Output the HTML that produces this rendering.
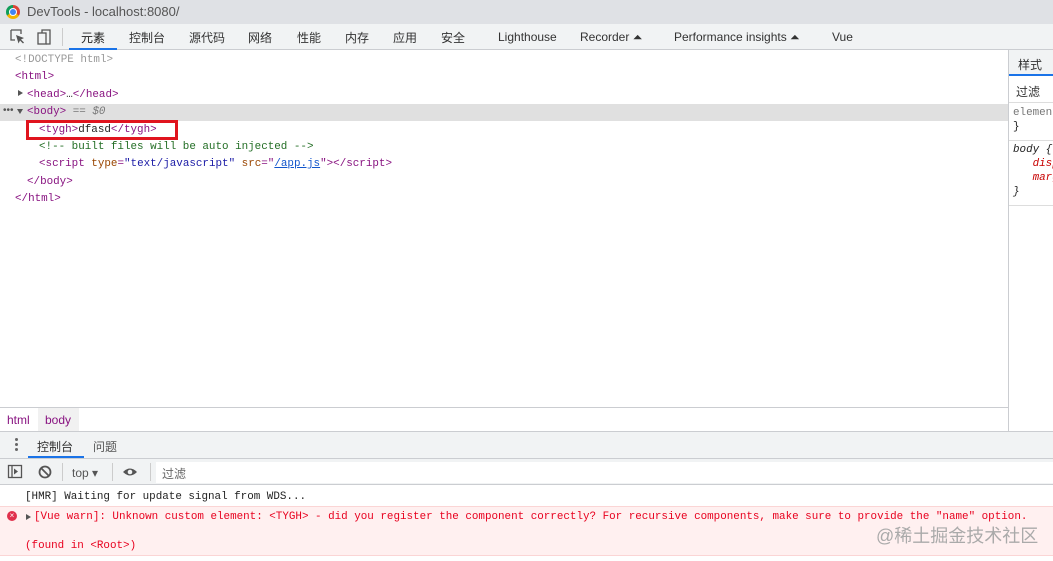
<!DOCTYPE html>
<html><head><meta charset="utf-8"><style>
*{margin:0;padding:0;box-sizing:border-box}
body{width:1053px;height:561px;overflow:hidden;background:#fff;font-family:"Liberation Sans","Noto Sans CJK SC",sans-serif;font-size:12px;color:#333;position:relative}
.abs{position:absolute;white-space:nowrap}
.mono{font-family:"Liberation Mono","Noto Sans CJK SC",monospace;font-size:10.9px;white-space:pre}
.tag{color:#881280}
.attr{color:#994500}
.val{color:#1a1aa6}
</style></head><body>
<div class="abs" style="left:0;top:0;width:1053px;height:24px;background:#dfe1e5"></div>
<div class="abs" style="left:6px;top:5px;width:14px;height:14px;border-radius:50%;background:conic-gradient(#db4437 0 120deg,#f4b400 120deg 240deg,#0f9d58 240deg 360deg)"></div>
<div class="abs" style="left:10px;top:9px;width:6px;height:6px;border-radius:50%;background:#4285f4;box-shadow:0 0 0 1px #fff"></div>
<div class="abs" style="left:27px;top:4px;font-size:13px;color:#555">DevTools - localhost:8080/</div>
<div class="abs" style="left:0;top:24px;width:1053px;height:26px;background:#f1f3f4;border-bottom:1px solid #cbcdd1"></div>
<svg class="abs" style="left:9px;top:28px" width="44" height="18"><path d="M2 2h10v4M2 2v10h4" stroke="#555" fill="none" stroke-width="1.3"/><path d="M7 7l8 3-3 1.5 3 3-1 1-3-3-1.5 3z" fill="#555"/><rect x="29" y="5" width="8" height="11" stroke="#555" fill="none" stroke-width="1.3"/><path d="M33 5V2h8v14h-4" stroke="#555" fill="none" stroke-width="1.3"/></svg>
<div class="abs" style="left:62px;top:28px;width:1px;height:18px;background:#ccc"></div>
<div class="abs" style="left:69px;top:48px;width:48px;height:2px;background:#1a73e8"></div>
<div class="abs" style="top:29px;left:0;font-size:12px;color:#333">
<span class="abs" style="left:81px;color:#222">元素</span><span class="abs" style="left:129px">控制台</span><span class="abs" style="left:189px">源代码</span><span class="abs" style="left:248px">网络</span><span class="abs" style="left:297px">性能</span><span class="abs" style="left:345px">内存</span><span class="abs" style="left:393px">应用</span><span class="abs" style="left:441px">安全</span><span class="abs" style="left:498px;top:1px">Lighthouse</span><span class="abs" style="left:580px;top:1px">Recorder ⏶</span><span class="abs" style="left:674px;top:1px">Performance insights ⏶</span><span class="abs" style="left:832px;top:1px">Vue</span></div>
<div class="abs" style="left:0;top:104px;width:1008px;height:17px;background:#e0e0e0"></div>
<div class="abs mono" style="left:15px;top:54px;color:#999">&lt;!DOCTYPE html&gt;</div>
<div class="abs mono" style="left:15px;top:71px"><span class="tag">&lt;html&gt;</span></div>
<div class="abs mono" style="left:27px;top:89px"><span class="tag">&lt;head&gt;</span>…<span class="tag">&lt;/head&gt;</span></div>
<div class="abs mono" style="left:27px;top:106px"><span class="tag">&lt;body&gt;</span> <span style="color:#777;font-style:italic">== $0</span></div>
<div class="abs mono" style="left:39px;top:124px"><span class="tag">&lt;tygh&gt;</span><span style="color:#222">dfasd</span><span class="tag">&lt;/tygh&gt;</span></div>
<div class="abs mono" style="left:39px;top:141px;color:#236e25">&lt;!-- built files will be auto injected --&gt;</div>
<div class="abs mono" style="left:39px;top:158px"><span class="tag">&lt;script</span> <span class="attr">type</span><span class="tag">=</span><span class="val">"text/javascript"</span> <span class="attr">src</span><span class="tag">="</span><span style="text-decoration:underline;color:#1155cc">/app.js</span><span class="tag">"&gt;&lt;/script&gt;</span></div>
<div class="abs mono" style="left:27px;top:176px"><span class="tag">&lt;/body&gt;</span></div>
<div class="abs mono" style="left:15px;top:193px"><span class="tag">&lt;/html&gt;</span></div>
<div class="abs" style="left:18px;top:90px;border-left:5px solid #555;border-top:3.5px solid transparent;border-bottom:3.5px solid transparent"></div>
<div class="abs" style="left:17px;top:109px;border-top:5px solid #555;border-left:3.5px solid transparent;border-right:3.5px solid transparent"></div>
<div class="abs" style="left:3px;top:105px;font-size:10px;color:#555">•••</div>
<div class="abs" style="left:26px;top:120px;width:152px;height:20px;border:3px solid #e0141e"></div>
<div class="abs" style="left:1008px;top:50px;width:1px;height:381px;background:#cbcdd1"></div>
<div class="abs" style="left:1009px;top:50px;width:44px;height:26px;background:#f1f3f4;border-bottom:2px solid #1a73e8"></div>
<div class="abs" style="left:1018px;top:56px">样式</div>
<div class="abs" style="left:1009px;top:78px;width:44px;height:25px;border-bottom:1px solid #ddd"></div>
<div class="abs" style="left:1016px;top:83px">过滤</div>
<div class="abs mono" style="left:1013px;top:106px;line-height:14px;color:#777">elemen
<span style="color:#222">}</span></div>
<div class="abs" style="left:1009px;top:140px;width:44px;height:1px;background:#ddd"></div>
<div class="abs mono" style="left:1013px;top:143px;line-height:14px;font-style:italic;color:#222">body {
   <span style="color:#c80000">disp</span>
   <span style="color:#c80000">marg</span>
}</div>
<div class="abs" style="left:1009px;top:205px;width:44px;height:1px;background:#ddd"></div>
<div class="abs" style="left:0;top:407px;width:1008px;height:1px;background:#cbcdd1"></div>
<div class="abs" style="left:38px;top:408px;width:41px;height:23px;background:#f1f1f1"></div>
<div class="abs" style="left:7px;top:413px;color:#881280">html</div>
<div class="abs" style="left:45px;top:413px;color:#881280">body</div>
<div class="abs" style="left:0;top:431px;width:1053px;height:28px;background:#f1f3f4;border-top:1px solid #cbcdd1;border-bottom:1px solid #cbcdd1"></div>
<div class="abs" style="left:15px;top:438px;width:3px;height:3px;background:#666;border-radius:50%;box-shadow:0 5px 0 #666,0 10px 0 #666"></div>
<div class="abs" style="left:37px;top:438px">控制台</div>
<div class="abs" style="left:28px;top:456px;width:56px;height:2px;background:#1a73e8"></div>
<div class="abs" style="left:93px;top:438px;color:#555">问题</div>
<div class="abs" style="left:0;top:459px;width:1053px;height:26px;background:#f1f3f4;border-bottom:1px solid #cbcdd1"></div>
<svg class="abs" style="left:7px;top:464px" width="140" height="16"><rect x="1.5" y="1.5" width="13" height="12" fill="none" stroke="#555" stroke-width="1.3"/><path d="M5 2v11" stroke="#555" stroke-width="1.3"/><path d="M7 4.5l4 3-4 3z" fill="#555"/><circle cx="38" cy="8" r="5.5" fill="none" stroke="#555" stroke-width="1.8"/><path d="M34 4l8 8" stroke="#555" stroke-width="1.8"/><path d="M116 8q7-7 14 0q-7 7-14 0z" fill="#555"/><circle cx="123" cy="8" r="2.3" fill="#f1f3f4"/></svg>
<div class="abs" style="left:62px;top:463px;width:1px;height:18px;background:#ccc"></div>
<div class="abs" style="left:72px;top:466px;color:#555">top ▾</div>
<div class="abs" style="left:112px;top:463px;width:1px;height:18px;background:#ccc"></div>
<div class="abs" style="left:150px;top:463px;width:1px;height:18px;background:#ccc"></div>
<div class="abs" style="left:156px;top:462px;width:897px;height:21px;background:#fff"></div>
<div class="abs" style="left:162px;top:465px;color:#666">过滤</div>
<div class="abs mono" style="left:25px;top:491px;color:#222">[HMR] Waiting for update signal from WDS...</div>
<div class="abs" style="left:0;top:506px;width:1053px;height:50px;background:#fff0f0;border-top:1px solid #fbd5d5;border-bottom:1px solid #fbd5d5"></div>
<div class="abs" style="left:7px;top:511px;width:10px;height:10px;border-radius:50%;background:#e0304c;color:#fff;font-size:8px;line-height:10px;text-align:center">×</div>
<div class="abs" style="left:26px;top:514px;border-left:5px solid #555;border-top:3.5px solid transparent;border-bottom:3.5px solid transparent"></div>
<div class="abs mono" style="left:34px;top:511px;color:#e8001e">[Vue warn]: Unknown custom element: &lt;TYGH&gt; - did you register the component correctly? For recursive components, make sure to provide the "name" option.</div>
<div class="abs mono" style="left:25px;top:540px;color:#e8001e">(found in &lt;Root&gt;)</div>
<div class="abs" style="left:876px;top:522px;font-size:18px;color:#aaa">@稀土掘金技术社区</div>
</body></html>
